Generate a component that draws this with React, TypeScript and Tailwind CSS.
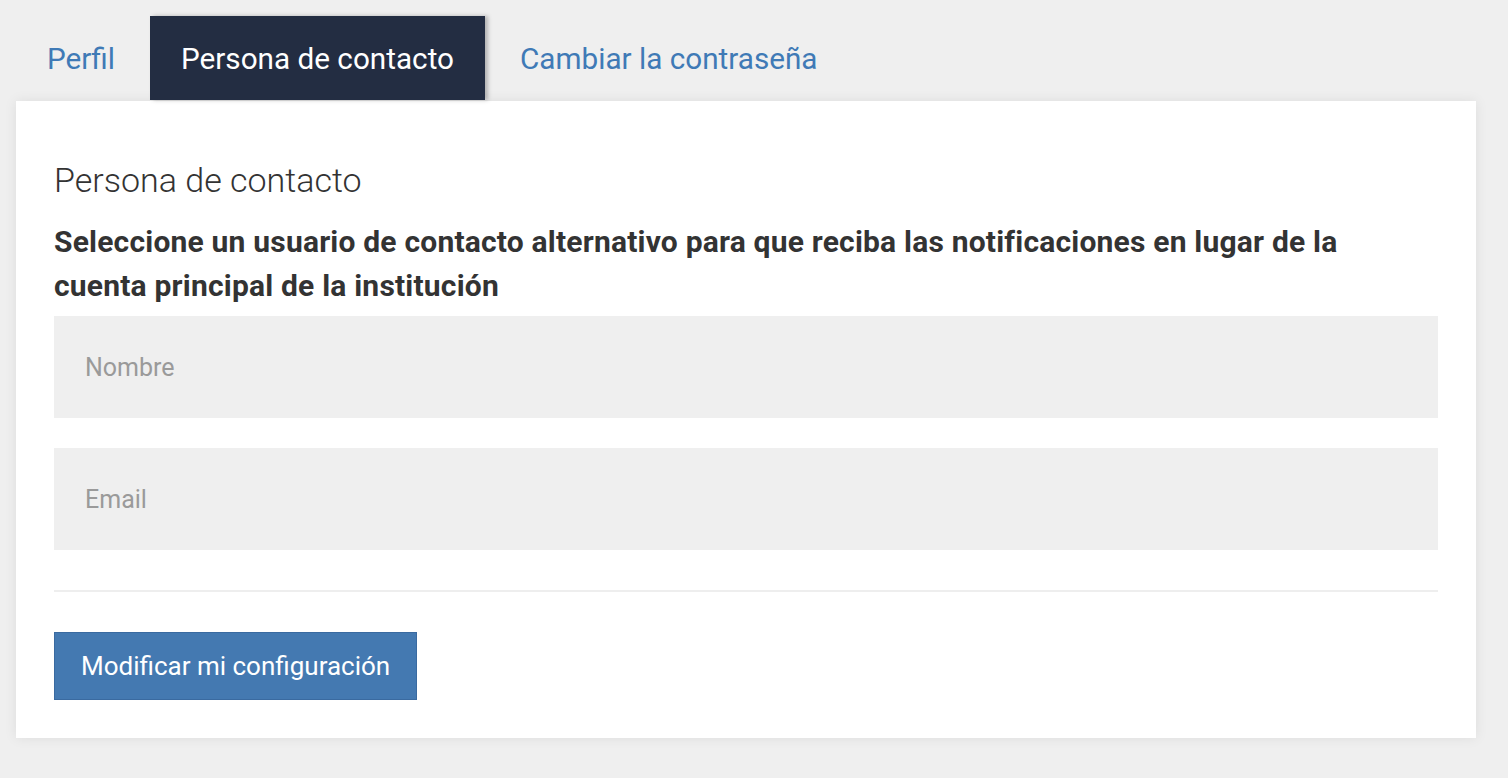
import React from "react";

export default function App() {
  const font = { fontFamily: "Roboto, 'Liberation Sans', sans-serif" };
  return (
    <div className="min-h-[778px] w-[1508px] bg-[#efefef] pl-[16px] pt-[16px]" style={font}>
      <div className="flex h-[84px] items-stretch">
        <div className="mr-[4px] flex items-center px-[31px] pt-[2px] text-[29.7px] text-[#3f7ab6]">Perfil</div>
        <div className="relative mr-[4px] flex items-center bg-[#232d42] px-[31px] pt-[2px] text-[29.7px] text-white shadow-[3px_0_4px_rgba(0,0,0,0.25)]">
          Persona de contacto
        </div>
        <div className="flex items-center px-[31px] pt-[2px] text-[29.7px] text-[#3f7ab6]">Cambiar la contraseña</div>
      </div>
      <div className="mt-[1px] w-[1460px] bg-white px-[38px] pb-[38px] pt-[59px] shadow-[0_0_12px_rgba(0,0,0,0.08)]">
        <h2 className="h-[40px] text-[34px] font-light leading-[40px] text-[#333]">Persona de contacto</h2>
        <p className="mt-[20px] max-w-[1320px] text-[30px] font-bold leading-[44px] tracking-[0.2px] text-[#333]">
          Seleccione un usuario de contacto alternativo para que reciba las notificaciones en lugar de la cuenta principal de la institución
        </p>
        <div className="mt-[8px] flex flex-col gap-[30px]">
          <input
            placeholder="Nombre"
            className="h-[102px] w-full bg-[#efefef] px-[31px] text-[25px] text-[#333] outline-none placeholder:text-[#9a9a9a]"
            style={font}
          />
          <input
            placeholder="Email"
            className="h-[102px] w-full bg-[#efefef] px-[31px] text-[25px] text-[#333] outline-none placeholder:text-[#9a9a9a]"
            style={font}
          />
        </div>
        <div className="mt-[40px] h-[2px] w-full bg-[#eeeeee]" />
        <button
          className="mt-[40px] h-[68px] border border-[#3a6aa0] bg-[#4479b1] px-[26px] text-[26px] text-white"
          style={font}
        >
          Modificar mi configuración
        </button>
      </div>
    </div>
  );
}
